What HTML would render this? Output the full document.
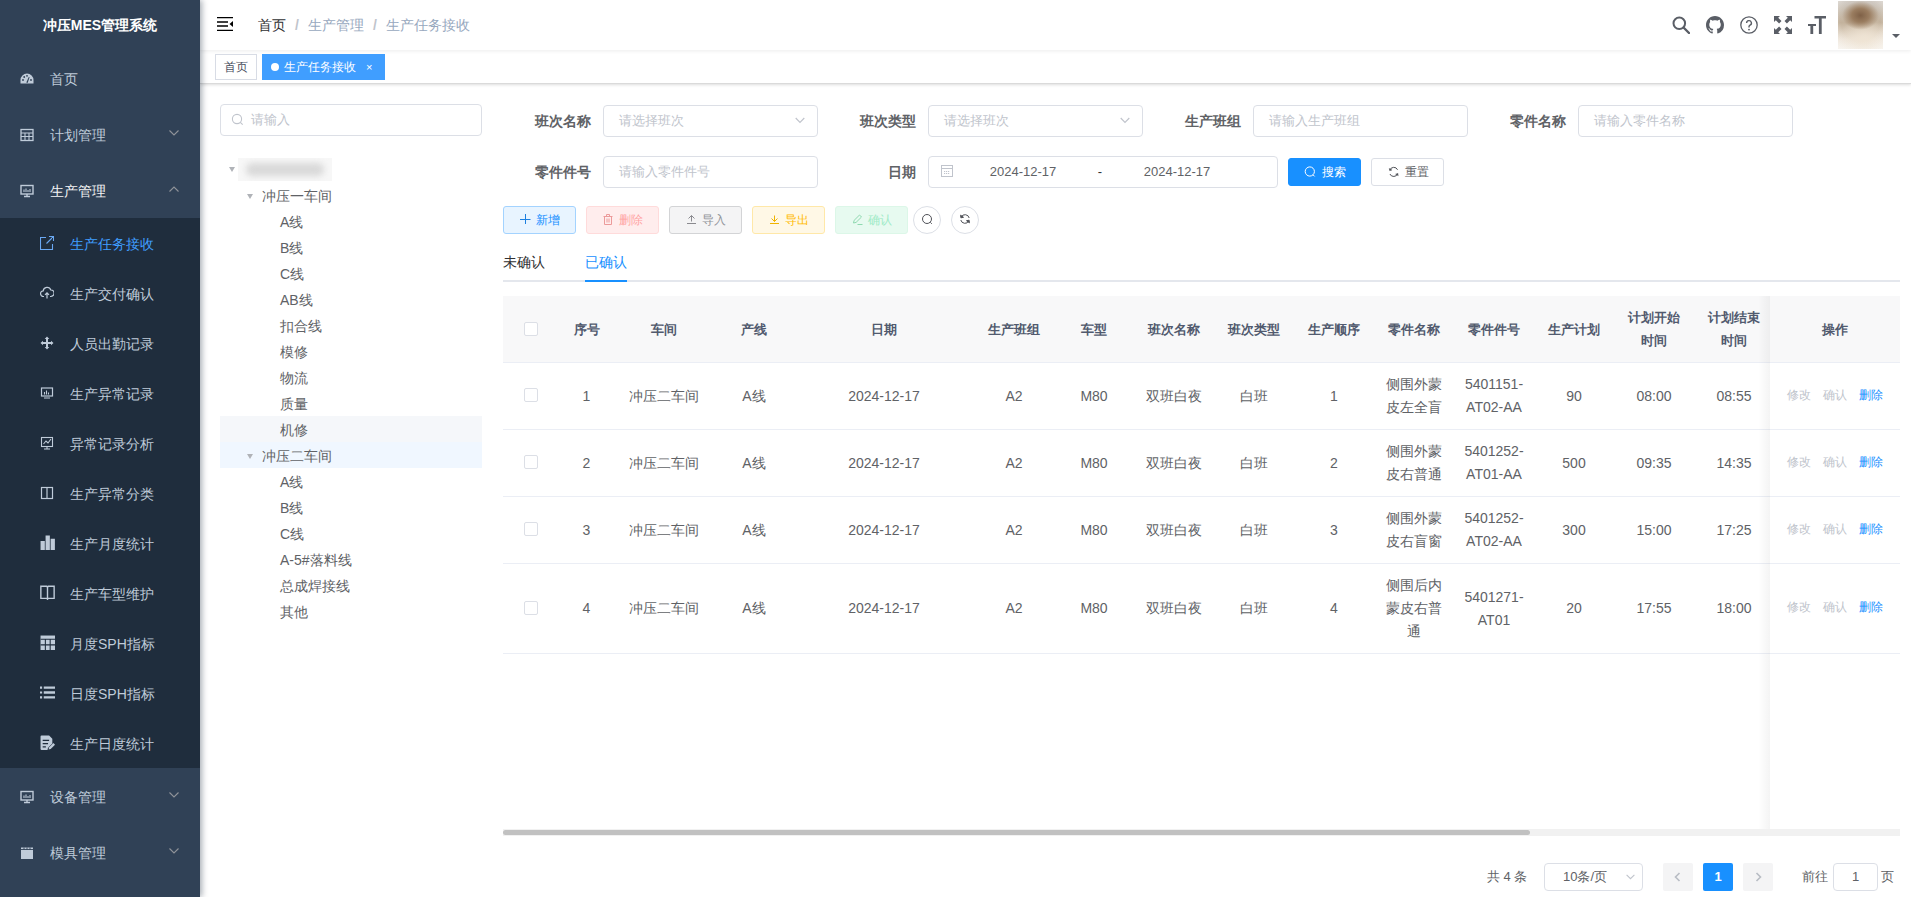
<!DOCTYPE html>
<html><head><meta charset="utf-8">
<style>
*{box-sizing:border-box;margin:0;padding:0}
html,body{width:1911px;height:897px;overflow:hidden;background:#fff;font-family:"Liberation Sans",sans-serif;-webkit-font-smoothing:antialiased}
.abs{position:absolute}
#side{position:absolute;left:0;top:0;width:200px;height:897px;background:#304156;box-shadow:2px 0 6px rgba(0,21,41,.35);z-index:5}
#side .title{position:absolute;left:0;top:0;width:200px;height:50px;line-height:50px;text-align:center;color:#fff;font-weight:700;font-size:14px}
.mi{position:absolute;left:0;width:200px;height:56px;line-height:56px;color:#bfcbd9;font-size:14px}
.mi .t{position:absolute;left:50px;top:1px}
.mi .ic{position:absolute;left:20px;top:22px;width:14px;height:14px}
.mi .ar{position:absolute;left:169px;top:24px;width:10px;height:6px}
#sub{position:absolute;left:0;top:218px;width:200px;height:550px;background:#1f2d3d}
.si{position:absolute;left:0;width:200px;height:50px;line-height:50px;color:#bfcbd9;font-size:14px}
.si .t{position:absolute;left:70px;top:1px}
.si .ic{position:absolute;left:40px;top:18px;width:14px;height:14px}
#nav{position:absolute;left:200px;top:0;width:1711px;height:50px;background:#fff;box-shadow:0 1px 4px rgba(0,0,0,.08);z-index:2}
#tags{position:absolute;left:200px;top:50px;width:1711px;height:34px;background:#fff;border-bottom:1px solid #dadada;box-shadow:0 1px 3px 0 rgba(0,0,0,.12),0 0 3px 0 rgba(0,0,0,.04)}
.tag{position:absolute;top:4px;height:26px;line-height:25px;padding-top:1px;border:1px solid #d8dce5;color:#495060;background:#fff;font-size:12px;padding:0 8px}
.tag.act{background:#409eff;border-color:#409eff;color:#fff}
.inp{position:absolute;height:32px;border:1px solid #dcdfe6;border-radius:4px;background:#fff;font-size:13px;color:#c0c4cc;line-height:30px;padding-left:15px}
.lbl{position:absolute;width:100px;text-align:right;padding-right:12px;font-size:14px;font-weight:700;color:#606266;line-height:32px;height:32px}
.btn{position:absolute;height:28px;line-height:26px;border:1px solid #dcdfe6;border-radius:3px;font-size:12px;text-align:center;background:#fff;color:#606266}
.gray{color:#909399}
table{border-collapse:collapse}
.th{position:absolute;top:296px;height:66px;background:#f8f8f9;}
.cell{position:absolute;text-align:center;font-size:14px;color:#606266;line-height:23px}
.hcell{position:absolute;text-align:center;font-size:13px;color:#515a6e;font-weight:700;line-height:23px}
.hl{position:absolute;left:503px;width:1397px;height:1px;background:#ebeef5}
.cb{position:absolute;width:14px;height:14px;border:1px solid #dcdfe6;border-radius:2px;background:#fff}
.tn{position:absolute;font-size:14px;color:#606266;line-height:26px;height:26px}
.caret{position:absolute;width:0;height:0;border-left:3.5px solid transparent;border-right:3.5px solid transparent;border-top:5px solid #b0b3b8}
</style></head><body>

<!-- SIDEBAR -->
<div id="side">
  <div class="title">冲压MES管理系统</div>
  <div class="mi" style="top:50px"><svg class="ic" viewBox="0 0 14 14"><path d="M7 1.5A6.5 6.5 0 0 0 .5 8v3.5h13V8A6.5 6.5 0 0 0 7 1.5z" fill="#bfcbd9"/><circle cx="3" cy="8" r=".9" fill="#304156"/><circle cx="4.2" cy="5" r=".9" fill="#304156"/><circle cx="7" cy="3.8" r=".9" fill="#304156"/><circle cx="11" cy="8" r=".9" fill="#304156"/><path d="M6.3 10.5l2.5-5.5.8.3-2 5.6z" fill="#304156"/></svg><span class="t">首页</span></div>
  <div class="mi" style="top:106px"><svg class="ic" viewBox="0 0 14 14"><rect x="1" y="1.5" width="12" height="11" fill="none" stroke="#bfcbd9" stroke-width="1.3"/><path d="M1 5h12M1 8.5h12M5 5v7.5M9 5v7.5" stroke="#bfcbd9" stroke-width="1.1"/></svg><span class="t">计划管理</span><svg class="ar" viewBox="0 0 10 6"><path d="M.5.5L5 5 9.5.5" fill="none" stroke="#909399" stroke-width="1.1"/></svg></div>
  <div class="mi" style="top:162px;color:#f4f4f5"><svg class="ic" viewBox="0 0 14 14"><rect x="1" y="1.5" width="12" height="8.5" fill="none" stroke="#bfcbd9" stroke-width="1.4"/><path d="M4 8V5.5M6 8V4.5M8 8V6M10 8V5" stroke="#bfcbd9" stroke-width="1.1"/><path d="M4 12.5h6M7 10v2.5" stroke="#bfcbd9" stroke-width="1.4"/></svg><span class="t">生产管理</span><svg class="ar" viewBox="0 0 10 6"><path d="M.5 5.5L5 1 9.5 5.5" fill="none" stroke="#909399" stroke-width="1.1"/></svg></div>
  <div id="sub">
    <div class="si" style="top:0;color:#409eff"><svg class="ic" viewBox="0 0 14 14"><path d="M6 1.5H.5v12h12V8" fill="none" stroke="#6aa8f2" stroke-width="1.1"/><path d="M9 .5h4.5V5M13.5.5L6.5 7.5" fill="none" stroke="#6aa8f2" stroke-width="1.1"/></svg><span class="t">生产任务接收</span></div>
    <div class="si" style="top:50px"><svg class="ic" viewBox="0 0 14 14"><path d="M4 10.5H3.5a2.8 2.8 0 0 1-.3-5.6A3.9 3.9 0 0 1 10.8 4a3.2 3.2 0 0 1 0 6.5H10" fill="none" stroke="#bfcbd9" stroke-width="1.2"/><path d="M7 12.5V7M5 8.8L7 6.8l2 2" fill="none" stroke="#bfcbd9" stroke-width="1.2"/></svg><span class="t">生产交付确认</span></div>
    <div class="si" style="top:100px"><svg class="ic" viewBox="0 0 14 14"><path d="M7 0.5L9.3 3H4.7zM7 13.5L4.7 11h4.6zM.5 7L3 4.7v4.6zM13.5 7L11 9.3V4.7z" fill="#bfcbd9"/><path d="M7 2.5v9M2.5 7h9" stroke="#bfcbd9" stroke-width="2"/></svg><span class="t">人员出勤记录</span></div>
    <div class="si" style="top:150px"><svg class="ic" viewBox="0 0 14 14"><rect x="1.5" y="2" width="11" height="8" fill="none" stroke="#bfcbd9" stroke-width="1.2"/><path d="M4.5 8.5V6M6.5 8.5V4.5M8.5 8.5V6.5M4 12h6" stroke="#bfcbd9" stroke-width="1.1"/></svg><span class="t">生产异常记录</span></div>
    <div class="si" style="top:200px"><svg class="ic" viewBox="0 0 14 14"><rect x="1.5" y="1.5" width="11" height="9" fill="none" stroke="#bfcbd9" stroke-width="1.1"/><path d="M3.5 8L6 5l2 2 3-4M7 10.5v2.5M4 13h6" fill="none" stroke="#bfcbd9" stroke-width="1.1"/></svg><span class="t">异常记录分析</span></div>
    <div class="si" style="top:250px"><svg class="ic" viewBox="0 0 14 14"><rect x="1.5" y="1.5" width="11" height="11" fill="none" stroke="#bfcbd9" stroke-width="1.2"/><path d="M7 1.5v11" stroke="#bfcbd9" stroke-width="1.2"/></svg><span class="t">生产异常分类</span></div>
    <div class="si" style="top:300px"><svg class="ic" viewBox="0 0 14 14" style="top:17px;width:15px;height:15px"><path d="M.5 14V5.5h4V14zM5.2 14V.5h4V14zM9.9 14V3.5h4V14z" fill="#bfcbd9"/></svg><span class="t">生产月度统计</span></div>
    <div class="si" style="top:350px"><svg class="ic" viewBox="0 0 14 14" style="top:17px;width:15px;height:15px"><path d="M.8 1.2h5.5L7 2l.7-.8h5.5v11.3H7.7L7 13.3l-.7-.8H.8z" fill="none" stroke="#bfcbd9" stroke-width="1.3"/><path d="M7 2v11" stroke="#bfcbd9" stroke-width="1.3"/></svg><span class="t">生产车型维护</span></div>
    <div class="si" style="top:400px"><svg class="ic" viewBox="0 0 14 14" style="top:17px;width:15px;height:15px"><rect x=".5" y=".5" width="13.5" height="13.5" fill="#bfcbd9"/><path d="M.5 4h13.5M.5 9.2h13.5M5 4v10M9.5 4v10" stroke="#1f2d3d" stroke-width="1"/></svg><span class="t">月度SPH指标</span></div>
    <div class="si" style="top:450px"><svg class="ic" viewBox="0 0 14 14" style="top:17px;width:15px;height:15px"><path d="M0 1.5h2v2H0zM0 6h2v2H0zM0 10.5h2v2H0z" fill="#bfcbd9"/><path d="M3.5 2.5h10.5M3.5 7h10.5M3.5 11.5h10.5" stroke="#bfcbd9" stroke-width="2.2"/></svg><span class="t">日度SPH指标</span></div>
    <div class="si" style="top:500px"><svg class="ic" viewBox="0 0 14 14" style="top:17px;width:15px;height:15px"><path d="M.5 1.5A1 1 0 0 1 1.5.5h7l3 3v4.5L7.5 12l-.5 2H1.5a1 1 0 0 1-1-1z" fill="#bfcbd9"/><path d="M2.5 5h6M2.5 8h5M2.5 11h3" stroke="#1f2d3d" stroke-width="1.2"/><path d="M8 13.5l.5-2 4-4 1.5 1.5-4 4z" fill="#bfcbd9"/></svg><span class="t">生产日度统计</span></div>
  </div>
  <div class="mi" style="top:768px"><svg class="ic" viewBox="0 0 14 14"><rect x="1" y="1.5" width="12" height="8.5" fill="none" stroke="#bfcbd9" stroke-width="1.4"/><path d="M4 8V5.5M6 8V4.5M8 8V6M10 8V5" stroke="#bfcbd9" stroke-width="1.1"/><path d="M4 12.5h6M7 10v2.5" stroke="#bfcbd9" stroke-width="1.4"/></svg><span class="t">设备管理</span><svg class="ar" viewBox="0 0 10 6"><path d="M.5.5L5 5 9.5.5" fill="none" stroke="#909399" stroke-width="1.1"/></svg></div>
  <div class="mi" style="top:824px"><svg class="ic" viewBox="0 0 14 14"><path d="M1 1.5h12v11.5H1z" fill="#bfcbd9"/><path d="M1 3.5h12M4 1.5v2M7 1.5v2M10 1.5v2" stroke="#304156" stroke-width=".9"/></svg><span class="t">模具管理</span><svg class="ar" viewBox="0 0 10 6"><path d="M.5.5L5 5 9.5.5" fill="none" stroke="#909399" stroke-width="1.1"/></svg></div>
</div>

<!-- NAVBAR -->
<div id="nav">
  <svg class="abs" style="left:17px;top:17px" width="16" height="14" viewBox="0 0 16 14"><path d="M0 .5h16M0 5h11M0 9h11M0 13.5h16" stroke="#000" stroke-width="1.3"/><path d="M16 4v6l-3.5-3z" fill="#000"/></svg>
  <div class="abs" style="left:58px;top:0;line-height:50px;font-size:14px;color:#303133">首页</div>
  <div class="abs" style="left:95px;top:0;line-height:50px;font-size:14px;color:#c0c4cc;font-weight:700">/</div>
  <div class="abs" style="left:108px;top:0;line-height:50px;font-size:14px;color:#97a8be">生产管理</div>
  <div class="abs" style="left:173px;top:0;line-height:50px;font-size:14px;color:#c0c4cc;font-weight:700">/</div>
  <div class="abs" style="left:186px;top:0;line-height:50px;font-size:14px;color:#97a8be">生产任务接收</div>
  <svg class="abs" style="left:1472px;top:16px" width="18" height="18" viewBox="0 0 18 18"><circle cx="7.3" cy="7.3" r="5.8" fill="none" stroke="#5a5e66" stroke-width="2"/><path d="M11.5 11.5l5.5 5.5" stroke="#5a5e66" stroke-width="2.4" stroke-linecap="round"/></svg>
  <svg class="abs" style="left:1506px;top:16px" width="18" height="18" viewBox="0 0 16 16"><path fill="#5a5e66" d="M8 0C3.58 0 0 3.58 0 8c0 3.54 2.29 6.53 5.47 7.59.4.07.55-.17.55-.38 0-.19-.01-.82-.01-1.49-2.01.37-2.53-.49-2.69-.94-.09-.23-.48-.94-.82-1.13-.28-.15-.68-.52-.01-.53.63-.01 1.08.58 1.23.82.72 1.21 1.87.87 2.33.66.07-.52.28-.87.51-1.07-1.780-.2-3.640-.89-3.640-3.950 0-.87.31-1.590.82-2.150-.08-.2-.36-1.020.08-2.120 0 0 .67-.21 2.2.82.64-.18 1.32-.27 2-.27.68 0 1.36.09 2 .27 1.53-1.04 2.2-.82 2.2-.82.44 1.100.16 1.920.08 2.120.51.56.82 1.270.82 2.150 0 3.070-1.870 3.750-3.650 3.950.29.25.54.73.54 1.480 0 1.070-.01 1.930-.01 2.200 0 .21.15.46.55.38A8.013 8.013 0 0 0 16 8c0-4.42-3.58-8-8-8z"/></svg>
  <svg class="abs" style="left:1540px;top:16px" width="18" height="18" viewBox="0 0 18 18"><circle cx="9" cy="9" r="8.2" fill="none" stroke="#5a5e66" stroke-width="1.3"/><path d="M6.6 7a2.4 2.4 0 1 1 3.4 2.2c-.7.4-1 .8-1 1.6v.6" fill="none" stroke="#5a5e66" stroke-width="1.4"/><circle cx="9" cy="13.6" r=".9" fill="#5a5e66"/></svg>
  <svg class="abs" style="left:1574px;top:16px" width="18" height="18" viewBox="0 0 18 18"><g fill="#5a5e66"><path d="M0 0h6L4.2 1.8 7.5 5.1 5.1 7.5 1.8 4.2 0 6z"/><path d="M18 0v6l-1.8-1.8-3.3 3.3-2.4-2.4 3.3-3.3L12 0z"/><path d="M0 18v-6l1.8 1.8 3.3-3.3 2.4 2.4-3.3 3.3L6 18z"/><path d="M18 18h-6l1.8-1.8-3.3-3.3 2.4-2.4 3.3 3.3L18 12z"/></g></svg>
  <svg class="abs" style="left:1608px;top:16px" width="18" height="18" viewBox="0 0 18 18"><g fill="#5a5e66"><path d="M6.5 0h11.5v2.4h-4.3V18h-2.8V2.4H6.5z"/><path d="M0 8h8v2H5.2V18H2.4V10H0z"/></g></svg>
  <div class="abs" style="left:1638px;top:1px;width:45px;height:48px;background:radial-gradient(ellipse 80% 80% at 50% 40%,rgba(255,255,255,0) 55%,rgba(250,248,245,.6) 100%),radial-gradient(ellipse 55% 40% at 50% 30%,#7f6147 0%,#9a7d60 35%,rgba(190,170,145,0) 75%),radial-gradient(ellipse 60% 45% at 60% 80%,#efe4d4 0%,rgba(239,228,212,0) 100%),linear-gradient(to bottom,#cfc9c2 0%,#c3b29c 45%,#ece2d5 80%,#f6f1ea 100%)"></div>
  <div class="abs" style="left:1692px;top:34px;width:0;height:0;border-left:4px solid transparent;border-right:4px solid transparent;border-top:4px solid #5a5e66"></div>
</div>
<div id="tags">
  <div class="tag" style="left:15px">首页</div>
  <div class="tag act" style="left:62px;padding-right:12px"><span style="display:inline-block;width:8px;height:8px;border-radius:50%;background:#fff;margin-right:5px;vertical-align:0px"></span>生产任务接收<span style="display:inline-block;margin-left:10px;font-size:11px">×</span></div>
</div>


<!-- TREE -->
<div class="inp" style="left:220px;top:104px;width:262px;padding-left:30px">请输入</div>
<svg class="abs" style="left:231px;top:113px" width="13" height="13" viewBox="0 0 13 13"><circle cx="6" cy="6" r="4.6" fill="none" stroke="#c0c4cc" stroke-width="1.1"/><path d="M9.3 9.3l2.4 2.4" stroke="#c0c4cc" stroke-width="1.1"/></svg>
<div class="caret" style="left:229px;top:167px"></div>
<div class="abs" style="left:238px;top:158px;width:94px;height:23px;background:#f7f7f7;overflow:hidden"><div class="abs" style="left:8px;top:5px;width:78px;height:13px;background:#d9d9d9;border-radius:6px;filter:blur(3px)"></div></div>
<div class="abs" style="left:220px;top:416px;width:262px;height:26px;background:#f5f7fa"></div>
<div class="abs" style="left:220px;top:442px;width:262px;height:26px;background:#f0f7ff"></div>
<div class="caret" style="left:247px;top:194px"></div>
<div class="tn" style="left:262px;top:183px">冲压一车间</div>
<div class="tn" style="left:280px;top:209px">A线</div>
<div class="tn" style="left:280px;top:235px">B线</div>
<div class="tn" style="left:280px;top:261px">C线</div>
<div class="tn" style="left:280px;top:287px">AB线</div>
<div class="tn" style="left:280px;top:313px">扣合线</div>
<div class="tn" style="left:280px;top:339px">模修</div>
<div class="tn" style="left:280px;top:365px">物流</div>
<div class="tn" style="left:280px;top:391px">质量</div>
<div class="tn" style="left:280px;top:417px">机修</div>
<div class="caret" style="left:247px;top:454px"></div>
<div class="tn" style="left:262px;top:443px">冲压二车间</div>
<div class="tn" style="left:280px;top:469px">A线</div>
<div class="tn" style="left:280px;top:495px">B线</div>
<div class="tn" style="left:280px;top:521px">C线</div>
<div class="tn" style="left:280px;top:547px">A-5#落料线</div>
<div class="tn" style="left:280px;top:573px">总成焊接线</div>
<div class="tn" style="left:280px;top:599px">其他</div>

<!-- SEARCH FORM -->
<div class="lbl" style="left:503px;top:105px">班次名称</div>
<div class="inp" style="left:603px;top:105px;width:215px">请选择班次</div>
<svg class="abs" style="left:795px;top:117px" width="10" height="7" viewBox="0 0 10 7"><path d="M.7 1l4.3 4.3L9.3 1" fill="none" stroke="#c0c4cc" stroke-width="1.2"/></svg>
<div class="lbl" style="left:828px;top:105px">班次类型</div>
<div class="inp" style="left:928px;top:105px;width:215px">请选择班次</div>
<svg class="abs" style="left:1120px;top:117px" width="10" height="7" viewBox="0 0 10 7"><path d="M.7 1l4.3 4.3L9.3 1" fill="none" stroke="#c0c4cc" stroke-width="1.2"/></svg>
<div class="lbl" style="left:1153px;top:105px">生产班组</div>
<div class="inp" style="left:1253px;top:105px;width:215px">请输入生产班组</div>
<div class="lbl" style="left:1478px;top:105px">零件名称</div>
<div class="inp" style="left:1578px;top:105px;width:215px">请输入零件名称</div>

<div class="lbl" style="left:503px;top:156px">零件件号</div>
<div class="inp" style="left:603px;top:156px;width:215px">请输入零件件号</div>
<div class="lbl" style="left:828px;top:156px">日期</div>
<div class="inp" style="left:928px;top:156px;width:350px;color:#606266"></div>
<svg class="abs" style="left:941px;top:165px" width="13" height="13" viewBox="0 0 13 13" fill="none" stroke="#c0c4cc" stroke-width="1"><rect x=".5" y=".5" width="11" height="11"/><path d="M.5 3.5h11"/><path d="M3 6.5h6M3 8.5h6" stroke-dasharray="1.2 .8"/></svg>
<div class="abs" style="left:968px;top:156px;width:110px;line-height:32px;font-size:13px;color:#606266;text-align:center">2024-12-17</div>
<div class="abs" style="left:1090px;top:156px;width:20px;line-height:32px;font-size:13px;color:#303133;text-align:center">-</div>
<div class="abs" style="left:1122px;top:156px;width:110px;line-height:32px;font-size:13px;color:#606266;text-align:center">2024-12-17</div>
<div class="btn" style="left:1288px;top:158px;width:73px;background:#1890ff;border-color:#1890ff;color:#fff;text-align:left;padding-left:33px">搜索</div>
<svg class="abs" style="left:1304px;top:166px" width="12" height="12" viewBox="0 0 12 12" fill="none" stroke="#fff" stroke-width="1"><circle cx="5.8" cy="5.5" r="4.6"/><path d="M9 8.8l1.6 1.6"/></svg>
<div class="btn" style="left:1371px;top:158px;width:73px;text-align:left;padding-left:33px">重置</div>
<svg class="abs" style="left:1388px;top:166px" width="12" height="12" viewBox="0 0 12 12" fill="none" stroke="#505258" stroke-width="1"><path d="M1.8 4.2A4.2 4.2 0 0 1 9.6 3.8M9.7 7.6A4.2 4.2 0 0 1 1.9 8"/><path d="M1.3 2.6l.5 2 2-.6zM10.2 9.6l-.5-2-2 .6z" fill="#505258" stroke-width=".6"/></svg>

<!-- TOOLBAR -->
<div class="btn" style="left:503px;top:206px;width:73px;background:#e8f4ff;border-color:#a3d3ff;color:#1890ff;text-align:left;padding-left:32px">新增</div>
<svg class="abs" style="left:520px;top:213px" width="12" height="12" viewBox="0 0 12 12" fill="none" stroke="#1c7fe0" stroke-width="1"><path d="M5.5 1v10M0 6.5h10.5"/></svg>
<div class="btn" style="left:586px;top:206px;width:73px;background:#ffeded;border-color:#ffdbdb;color:#ffa4a4;text-align:left;padding-left:32px">删除</div>
<svg class="abs" style="left:603px;top:213px" width="12" height="12" viewBox="0 0 12 12" fill="none" stroke="#ec9a9a" stroke-width="1"><path d="M.5 3.5h9M3.5 3V1.5h3V3M1.5 3.5v8h7v-8M4 5.5v4M6 5.5v4"/></svg>
<div class="btn" style="left:669px;top:206px;width:73px;background:#f4f4f5;border-color:#d3d4d6;color:#909399;text-align:left;padding-left:32px">导入</div>
<svg class="abs" style="left:686px;top:213px" width="12" height="12" viewBox="0 0 12 12" fill="none" stroke="#8a8a8f" stroke-width="1"><path d="M5.5 2.5v6M2.5 5.5l3-3 3 3M1 10.5h9"/></svg>
<div class="btn" style="left:752px;top:206px;width:73px;background:#fff8e6;border-color:#ffe8a8;color:#ffba00;text-align:left;padding-left:32px">导出</div>
<svg class="abs" style="left:769px;top:213px" width="12" height="12" viewBox="0 0 12 12" fill="none" stroke="#f0b400" stroke-width="1"><path d="M5.5 2.5v6M2.5 5.5l3 3 3-3M1 10.5h9"/></svg>
<div class="btn" style="left:835px;top:206px;width:73px;background:#e7faf0;border-color:#dcf7e8;color:#a0ebc7;text-align:left;padding-left:32px">确认</div>
<svg class="abs" style="left:852px;top:213px" width="12" height="12" viewBox="0 0 12 12" fill="none" stroke="#8fd9b0" stroke-width="1"><path d="M1.5 10l.6-2.6L7.5 2l2 2-5.4 5.4zM5.5 11.5h5"/></svg>
<div class="btn" style="left:913px;top:206px;width:28px;border-radius:50%;border-color:#dcdfe6"></div>
<svg class="abs" style="left:921px;top:213px" width="12" height="12" viewBox="0 0 12 12" fill="none" stroke="#505258" stroke-width="1"><circle cx="6" cy="6" r="4.5"/><path d="M9.3 9.3l1.5 1.5"/></svg>
<div class="btn" style="left:951px;top:206px;width:28px;border-radius:50%;border-color:#dcdfe6"></div>
<svg class="abs" style="left:959px;top:213px" width="12" height="12" viewBox="0 0 12 12" fill="none" stroke="#505258" stroke-width="1"><path d="M2.2 4A4.3 4.3 0 0 1 10.2 5M9.8 8A4.3 4.3 0 0 1 1.8 7"/><path d="M1.6 2.2l.3 2.6 2.6-.5z M10.4 9.8l-.3-2.6-2.6.5z" fill="#505258"/></svg>

<!-- TABS -->
<div class="abs" style="left:503px;top:242px;line-height:40px;font-size:14px;color:#303133">未确认</div>
<div class="abs" style="left:585px;top:242px;line-height:40px;font-size:14px;color:#1890ff">已确认</div>
<div class="abs" style="left:503px;top:280px;width:1397px;height:2px;background:#e4e7ed"></div>
<div class="abs" style="left:585px;top:280px;width:42px;height:2px;background:#1890ff"></div>


<!-- TABLE -->
<div class="abs" style="left:503px;top:296px;width:1397px;height:66px;background:#f8f8f9"></div>
<div class="cb" style="left:524px;top:322px"></div>
<div class="hcell" style="left:559px;top:318px;width:55px">序号</div>
<div class="hcell" style="left:614px;top:318px;width:100px">车间</div>
<div class="hcell" style="left:714px;top:318px;width:80px">产线</div>
<div class="hcell" style="left:794px;top:318px;width:180px">日期</div>
<div class="hcell" style="left:974px;top:318px;width:80px">生产班组</div>
<div class="hcell" style="left:1054px;top:318px;width:80px">车型</div>
<div class="hcell" style="left:1134px;top:318px;width:80px">班次名称</div>
<div class="hcell" style="left:1214px;top:318px;width:80px">班次类型</div>
<div class="hcell" style="left:1294px;top:318px;width:80px">生产顺序</div>
<div class="hcell" style="left:1374px;top:318px;width:80px">零件名称</div>
<div class="hcell" style="left:1454px;top:318px;width:80px">零件件号</div>
<div class="hcell" style="left:1534px;top:318px;width:80px">生产计划</div>
<div class="hcell" style="left:1614px;top:306px;width:80px">计划开始<br>时间</div>
<div class="hcell" style="left:1694px;top:306px;width:80px">计划结束<br>时间</div>
<div class="hl" style="top:362px"></div>
<div class="cb" style="left:524px;top:388px"></div>
<div class="cell" style="left:559px;top:385px;width:55px">1</div>
<div class="cell" style="left:614px;top:385px;width:100px">冲压二车间</div>
<div class="cell" style="left:714px;top:385px;width:80px">A线</div>
<div class="cell" style="left:794px;top:385px;width:180px">2024-12-17</div>
<div class="cell" style="left:974px;top:385px;width:80px">A2</div>
<div class="cell" style="left:1054px;top:385px;width:80px">M80</div>
<div class="cell" style="left:1134px;top:385px;width:80px">双班白夜</div>
<div class="cell" style="left:1214px;top:385px;width:80px">白班</div>
<div class="cell" style="left:1294px;top:385px;width:80px">1</div>
<div class="cell" style="left:1374px;top:373px;width:80px">侧围外蒙<br>皮左全盲</div>
<div class="cell" style="left:1454px;top:373px;width:80px">5401151-<br>AT02-AA</div>
<div class="cell" style="left:1534px;top:385px;width:80px">90</div>
<div class="cell" style="left:1614px;top:385px;width:80px">08:00</div>
<div class="cell" style="left:1694px;top:385px;width:80px">08:55</div>
<div class="hl" style="top:429px"></div>
<div class="cb" style="left:524px;top:455px"></div>
<div class="cell" style="left:559px;top:452px;width:55px">2</div>
<div class="cell" style="left:614px;top:452px;width:100px">冲压二车间</div>
<div class="cell" style="left:714px;top:452px;width:80px">A线</div>
<div class="cell" style="left:794px;top:452px;width:180px">2024-12-17</div>
<div class="cell" style="left:974px;top:452px;width:80px">A2</div>
<div class="cell" style="left:1054px;top:452px;width:80px">M80</div>
<div class="cell" style="left:1134px;top:452px;width:80px">双班白夜</div>
<div class="cell" style="left:1214px;top:452px;width:80px">白班</div>
<div class="cell" style="left:1294px;top:452px;width:80px">2</div>
<div class="cell" style="left:1374px;top:440px;width:80px">侧围外蒙<br>皮右普通</div>
<div class="cell" style="left:1454px;top:440px;width:80px">5401252-<br>AT01-AA</div>
<div class="cell" style="left:1534px;top:452px;width:80px">500</div>
<div class="cell" style="left:1614px;top:452px;width:80px">09:35</div>
<div class="cell" style="left:1694px;top:452px;width:80px">14:35</div>
<div class="hl" style="top:496px"></div>
<div class="cb" style="left:524px;top:522px"></div>
<div class="cell" style="left:559px;top:519px;width:55px">3</div>
<div class="cell" style="left:614px;top:519px;width:100px">冲压二车间</div>
<div class="cell" style="left:714px;top:519px;width:80px">A线</div>
<div class="cell" style="left:794px;top:519px;width:180px">2024-12-17</div>
<div class="cell" style="left:974px;top:519px;width:80px">A2</div>
<div class="cell" style="left:1054px;top:519px;width:80px">M80</div>
<div class="cell" style="left:1134px;top:519px;width:80px">双班白夜</div>
<div class="cell" style="left:1214px;top:519px;width:80px">白班</div>
<div class="cell" style="left:1294px;top:519px;width:80px">3</div>
<div class="cell" style="left:1374px;top:507px;width:80px">侧围外蒙<br>皮右盲窗</div>
<div class="cell" style="left:1454px;top:507px;width:80px">5401252-<br>AT02-AA</div>
<div class="cell" style="left:1534px;top:519px;width:80px">300</div>
<div class="cell" style="left:1614px;top:519px;width:80px">15:00</div>
<div class="cell" style="left:1694px;top:519px;width:80px">17:25</div>
<div class="hl" style="top:563px"></div>
<div class="cb" style="left:524px;top:601px"></div>
<div class="cell" style="left:559px;top:597px;width:55px">4</div>
<div class="cell" style="left:614px;top:597px;width:100px">冲压二车间</div>
<div class="cell" style="left:714px;top:597px;width:80px">A线</div>
<div class="cell" style="left:794px;top:597px;width:180px">2024-12-17</div>
<div class="cell" style="left:974px;top:597px;width:80px">A2</div>
<div class="cell" style="left:1054px;top:597px;width:80px">M80</div>
<div class="cell" style="left:1134px;top:597px;width:80px">双班白夜</div>
<div class="cell" style="left:1214px;top:597px;width:80px">白班</div>
<div class="cell" style="left:1294px;top:597px;width:80px">4</div>
<div class="cell" style="left:1374px;top:574px;width:80px">侧围后内<br>蒙皮右普<br>通</div>
<div class="cell" style="left:1454px;top:586px;width:80px">5401271-<br>AT01</div>
<div class="cell" style="left:1534px;top:597px;width:80px">20</div>
<div class="cell" style="left:1614px;top:597px;width:80px">17:55</div>
<div class="cell" style="left:1694px;top:597px;width:80px">18:00</div>
<div class="hl" style="top:653px"></div>
<div class="abs" style="left:1758px;top:296px;width:12px;height:533px;background:linear-gradient(to right,rgba(0,0,0,0),rgba(0,0,0,.045))"></div>
<div class="abs" style="left:1770px;top:296px;width:130px;height:533px;background:#fff"></div>
<div class="abs" style="left:1770px;top:296px;width:130px;height:66px;background:#f8f8f9"></div>
<div class="hcell" style="left:1770px;top:318px;width:130px">操作</div>
<div class="abs" style="left:1770px;top:362px;width:130px;height:1px;background:#ebeef5"></div>
<div class="abs" style="left:1787px;top:384px;line-height:23px;font-size:12px;color:#c0c4cc">修改</div>
<div class="abs" style="left:1823px;top:384px;line-height:23px;font-size:12px;color:#c0c4cc">确认</div>
<div class="abs" style="left:1859px;top:384px;line-height:23px;font-size:12px;color:#1890ff">删除</div>
<div class="abs" style="left:1770px;top:429px;width:130px;height:1px;background:#ebeef5"></div>
<div class="abs" style="left:1787px;top:451px;line-height:23px;font-size:12px;color:#c0c4cc">修改</div>
<div class="abs" style="left:1823px;top:451px;line-height:23px;font-size:12px;color:#c0c4cc">确认</div>
<div class="abs" style="left:1859px;top:451px;line-height:23px;font-size:12px;color:#1890ff">删除</div>
<div class="abs" style="left:1770px;top:496px;width:130px;height:1px;background:#ebeef5"></div>
<div class="abs" style="left:1787px;top:518px;line-height:23px;font-size:12px;color:#c0c4cc">修改</div>
<div class="abs" style="left:1823px;top:518px;line-height:23px;font-size:12px;color:#c0c4cc">确认</div>
<div class="abs" style="left:1859px;top:518px;line-height:23px;font-size:12px;color:#1890ff">删除</div>
<div class="abs" style="left:1770px;top:563px;width:130px;height:1px;background:#ebeef5"></div>
<div class="abs" style="left:1787px;top:596px;line-height:23px;font-size:12px;color:#c0c4cc">修改</div>
<div class="abs" style="left:1823px;top:596px;line-height:23px;font-size:12px;color:#c0c4cc">确认</div>
<div class="abs" style="left:1859px;top:596px;line-height:23px;font-size:12px;color:#1890ff">删除</div>
<div class="abs" style="left:1770px;top:653px;width:130px;height:1px;background:#ebeef5"></div>
<div class="abs" style="left:503px;top:829px;width:1397px;height:7px;background:#f1f1f1"></div>
<div class="abs" style="left:503px;top:830px;width:1027px;height:5px;background:#c1c1c1;border-radius:3px"></div>
<!-- PAGINATION -->
<div class="abs" style="left:1487px;top:863px;line-height:28px;font-size:13px;color:#606266">共 4 条</div>
<div class="inp" style="left:1544px;top:863px;width:99px;height:28px;line-height:26px;font-size:13px;color:#606266;padding-left:18px">10条/页</div>
<svg class="abs" style="left:1626px;top:874px" width="9" height="6" viewBox="0 0 9 6"><path d="M.6.8l3.9 3.9L8.4.8" fill="none" stroke="#c0c4cc" stroke-width="1.1"/></svg>
<div class="abs" style="left:1663px;top:863px;width:30px;height:28px;background:#f4f4f5;border-radius:2px"></div>
<svg class="abs" style="left:1674px;top:872px" width="7" height="10" viewBox="0 0 7 10"><path d="M5.5 1L1.5 5l4 4" fill="none" stroke="#b8bcc4" stroke-width="1.6"/></svg>
<div class="abs" style="left:1703px;top:863px;width:30px;height:28px;background:#1890ff;border-radius:2px;color:#fff;font-weight:700;font-size:13px;line-height:28px;text-align:center">1</div>
<div class="abs" style="left:1743px;top:863px;width:30px;height:28px;background:#f4f4f5;border-radius:2px"></div>
<svg class="abs" style="left:1755px;top:872px" width="7" height="10" viewBox="0 0 7 10"><path d="M1.5 1l4 4-4 4" fill="none" stroke="#b8bcc4" stroke-width="1.6"/></svg>
<div class="abs" style="left:1802px;top:863px;line-height:28px;font-size:13px;color:#606266">前往</div>
<div class="inp" style="left:1833px;top:863px;width:45px;height:28px;line-height:26px;font-size:13px;color:#606266;padding:0;text-align:center">1</div>
<div class="abs" style="left:1881px;top:863px;line-height:28px;font-size:13px;color:#606266">页</div>

</body></html>
